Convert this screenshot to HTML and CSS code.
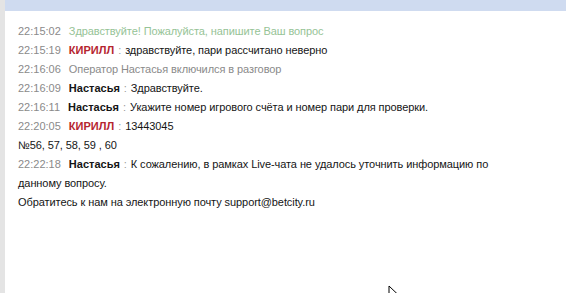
FILE: index.html
```html
<!DOCTYPE html>
<html lang="ru">
<head>
<meta charset="utf-8">
<title>Чат</title>
<link rel="stylesheet" href="styles.css">
</head>
<body>
<div class="page">
  <div class="strip"></div>
  <div class="main">
    <div class="topbar"></div>
    <div class="log">
      <div class="msg greet"><span class="time">22:15:02</span>Здравствуйте! Пожалуйста, напишите Ваш вопрос</div>
      <div class="msg"><span class="time">22:15:19</span><span class="name client">КИРИЛЛ</span><span class="sep">:</span>здравствуйте, пари рассчитано неверно</div>
      <div class="msg sys"><span class="time">22:16:06</span>Оператор Настасья включился в разговор</div>
      <div class="msg"><span class="time">22:16:09</span><span class="name op">Настасья</span><span class="sep">:</span>Здравствуйте.</div>
      <div class="msg"><span class="time">22:16:11</span><span class="name op">Настасья</span><span class="sep">:</span>Укажите номер игрового счёта и номер пари для проверки.</div>
      <div class="msg"><span class="time">22:20:05</span><span class="name client">КИРИЛЛ</span><span class="sep">:</span>13443045<br>№56, 57, 58, 59 , 60</div>
      <div class="msg"><span class="time">22:22:18</span><span class="name op">Настасья</span><span class="sep">:</span>К сожалению, в рамках Live-чата не удалось уточнить информацию по<br>данному вопросу.<br>Обратитесь к нам на электронную почту support@betcity.ru</div>
    </div>
  </div>
</div>
<svg class="cursor" width="12" height="18" viewBox="0 0 12 18"><path d="M1 1 L1 15 L4.5 11.5 L7 17 L9 16 L6.5 10.5 L11 10.5 Z" fill="#fff" stroke="#000" stroke-width="1"/></svg>
</body>
</html>
```
FILE: styles.css
```css
html, body {
  margin: 0;
  padding: 0;
  background: #fff;
  height: 100%;
  overflow: hidden;
}
body {
  font-family: "Liberation Sans", Arial, sans-serif;
  font-size: 11px;
  color: #151515;
  position: relative;
}
.page {
  display: flex;
  height: 293px;
}
.strip {
  width: 5px;
  background: #e4e4e4;
  flex: none;
}
.main {
  flex: 1;
  display: flex;
  flex-direction: column;
}
.topbar {
  height: 11px;
  background: #cfdbf0;
}
.log {
  padding: 11px 20px 0 13px;
  line-height: 19px;
}
.msg {
  letter-spacing: -0.08px;
}
.time {
  color: #8a8a8a;
  margin-right: 8px;
  letter-spacing: 0;
}
.greet {
  color: #96c396;
}
.sys {
  color: #8a8a8a;
}
.name {
  font-weight: bold;
  letter-spacing: 0;
}
.client {
  color: #b5252f;
}
.op {
  color: #151515;
}
.sep {
  color: #9a9a9a;
  margin: 0 4px;
}
.cursor {
  position: absolute;
  left: 388px;
  top: 285px;
}
```
